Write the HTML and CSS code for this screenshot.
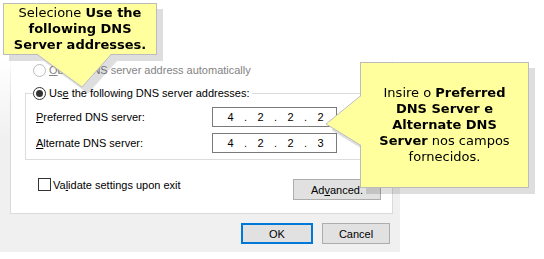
FILE: index.html
```html
<!DOCTYPE html>
<html lang="pt">
<head>
   <meta charset="UTF-8">
   <title>DNS server addresses</title>
   <link rel="stylesheet" href="styles.css">
</head>
<body>
   <div class="stage">
       <div class="dialog">
           <div class="panel">
               <div class="opt opt-off"><span class="radio"></span><span><u>O</u>btain DNS server address automatically</span></div>
               <fieldset class="group">
                   <legend class="opt"><span class="radio on"></span><span>Us<u>e</u> the following DNS server addresses:</span></legend>
                   <div class="field first">
                       <label><u>P</u>referred DNS server:</label>
                       <div class="ip"><span>4</span><span>.</span><span>2</span><span>.</span><span>2</span><span>.</span><span>2</span></div>
                   </div>
                   <div class="field">
                       <label><u>A</u>lternate DNS server:</label>
                       <div class="ip"><span>4</span><span>.</span><span>2</span><span>.</span><span>2</span><span>.</span><span>3</span></div>
                   </div>
               </fieldset>
               <div class="bottom-row">
                   <label class="check"><span class="box"></span><span>Va<u>l</u>idate settings upon exit</span></label>
                   <button class="btn adv">Ad<u>v</u>anced.</button>
               </div>
           </div>
           <div class="footer">
               <button class="btn ok">OK</button>
               <button class="btn cancel">Cancel</button>
           </div>
       </div>

       <div class="callout callout-top">
           <div class="callout-box">
               <p>Selecione <b>Use the<br>following DNS<br>Server addresses.</b></p>
           </div>
           <svg class="pointer-down" width="120" height="90">
               <polygon points="33,50 79,84 109,50" fill="#ffff9e"/>
               <polyline points="33.5,51 79,84 108.5,51" fill="none" stroke="#bcbcbc"/>
           </svg>
       </div>

       <div class="callout callout-side">
           <div class="callout-box">
               <p>Insire o <b>Preferred<br>DNS Server e<br>Alternate DNS<br>Server</b> nos campos<br>fornecidos.</p>
           </div>
           <svg class="pointer-left" width="44" height="126">
               <polygon points="42,33 6,62 42,84" fill="#ffff9e"/>
               <polyline points="41,33.5 6,62 41,83.5" fill="none" stroke="#bcbcbc"/>
           </svg>
       </div>
   </div>
</body>
</html>
```

FILE: styles.css
```css
body {
    margin: 0;
    background: #fff;
    font-family: "Liberation Sans", Arial, sans-serif;
    font-size: 11px;
    color: #000;
}
.stage {
    position: relative;
    width: 544px;
    height: 259px;
    overflow: hidden;
}

/* dialog */
.dialog {
    width: 400px;
    height: 252px;
    background: linear-gradient(#fff 0, #fff 60px, #f0f0f0 140px);
}
.panel {
    margin-left: 10px;
    width: 383px;
    height: 214px;
    box-sizing: border-box;
    padding-top: 64px;
    background: #fff;
    border: 1px solid #dadada;
    border-top: 0;
    border-image: linear-gradient(rgba(218, 218, 218, 0) 55px, #dadada 110px) 1;
}
.opt {
    display: flex;
    align-items: center;
    gap: 3px;
    height: 13px;
    line-height: 13px;
}
.panel > .opt {
    margin-left: 22px;
}
.opt-off {
    color: #838383;
}
.radio {
    width: 13px;
    height: 13px;
    box-sizing: border-box;
    border: 1px solid #333;
    border-radius: 50%;
    background: #fff;
    display: flex;
    align-items: center;
    justify-content: center;
}
.radio.on::after {
    content: "";
    width: 7px;
    height: 7px;
    border-radius: 50%;
    background: #333;
}
.opt-off .radio {
    border-color: #bcbcbc;
}
.group {
    margin: 10px 0 0 14px;
    width: 356px;
    min-width: 0;
    box-sizing: border-box;
    padding: 0 0 6px 7px;
    border: 1px solid #dcdcdc;
}
.group legend {
    padding: 0 2px 0 0;
}
.field {
    display: grid;
    grid-template-columns: 176px 125px;
    align-items: center;
    height: 20px;
    margin-top: 6px;
    padding-left: 3px;
}
.field.first {
    margin-top: 7px;
}
.ip {
    height: 20px;
    box-sizing: border-box;
    border: 1px solid #7a7a7a;
    background: #fff;
    display: flex;
    align-items: center;
    padding-left: 10px;
}
.ip span {
    width: 15px;
    text-align: center;
}
.bottom-row {
    display: flex;
    justify-content: space-between;
    align-items: flex-start;
    margin-top: 18px;
    padding: 0 11px 0 27px;
}
.check {
    display: flex;
    align-items: center;
    gap: 2px;
    height: 13px;
}
.box {
    width: 13px;
    height: 13px;
    box-sizing: border-box;
    border: 1px solid #333;
    background: #fff;
}
.btn {
    font: inherit;
    color: #000;
    background: #e1e1e1;
    border: 1px solid #adadad;
    height: 21px;
    padding: 0;
    box-sizing: border-box;
}
.adv {
    width: 88px;
    margin-top: 1px;
}
.footer {
    display: flex;
    justify-content: flex-end;
    gap: 9px;
    padding: 9px 10px 0 0;
}
.ok {
    width: 72px;
    border: 2px solid #0078d7;
}
.cancel {
    width: 68px;
}

/* callouts */
.callout {
    position: absolute;
    filter: drop-shadow(6px 6px 0 rgba(0, 0, 0, 0.13));
    font-family: "DejaVu Sans", Verdana, sans-serif;
    font-size: 13px;
    line-height: 16px;
    color: #000;
}
.callout-box {
    box-sizing: border-box;
    background: #ffff9e;
    border: 1px solid #bcbcbc;
    text-align: center;
    display: flex;
    align-items: center;
    justify-content: center;
}
.callout-box p {
    margin: 0;
}
.callout-top {
    left: 3px;
    top: 3px;
}
.callout-top .callout-box {
    width: 154px;
    height: 52px;
}
.callout-side {
    left: 360px;
    top: 62px;
}
.callout-side .callout-box {
    width: 169px;
    height: 126px;
}
.callout svg {
    position: absolute;
    overflow: visible;
}
.pointer-down {
    left: 0;
    top: 0;
}
.pointer-left {
    left: -40px;
    top: 0;
}
```
